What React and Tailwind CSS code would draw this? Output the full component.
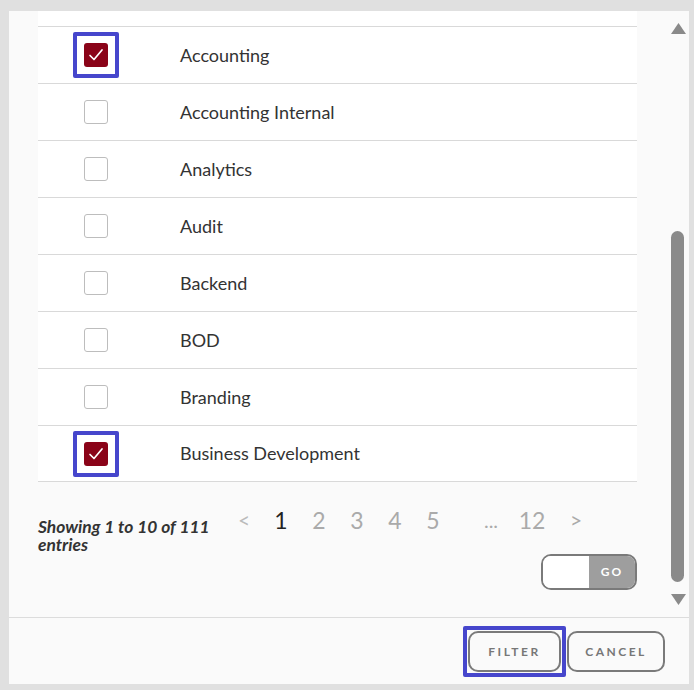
import React, { useState } from 'react';

const departments = [
  { name: 'Accounting', checked: true },
  { name: 'Accounting Internal', checked: false },
  { name: 'Analytics', checked: false },
  { name: 'Audit', checked: false },
  { name: 'Backend', checked: false },
  { name: 'BOD', checked: false },
  { name: 'Branding', checked: false },
  { name: 'Business Development', checked: true },
];

const Checkbox = ({ checked, onToggle }) => {
  if (checked) {
    return (
      <button
        onClick={onToggle}
        className="w-[46px] h-[46px] border-4 border-[#4646cc] rounded-[2px] flex items-center justify-center"
      >
        <span className="w-[24px] h-[24px] rounded-[3px] bg-[#8a0318] flex items-center justify-center">
          <svg width="20" height="20" viewBox="0 0 20 20" fill="none">
            <polyline points="4,10.5 8,14.5 16,5" stroke="white" strokeWidth="1.7" strokeLinecap="round" strokeLinejoin="round" />
          </svg>
        </span>
      </button>
    );
  }
  return (
    <button
      onClick={onToggle}
      className="w-[24px] h-[24px] rounded-[3px] border border-[#bdbdbd] bg-white"
    />
  );
};

const App = () => {
  const [items, setItems] = useState(departments);

  const toggle = (i) => {
    setItems(items.map((it, idx) => (idx === i ? { ...it, checked: !it.checked } : it)));
  };

  return (
    <div className="w-[694px] h-[690px] bg-[#e0e0e0] pt-[11px] pl-[9px] pr-[5px] pb-[6px] font-['Lato',sans-serif]">
      <div className="w-full h-full bg-[#fafafa] flex flex-col">
        {/* scroll area */}
        <div className="h-[606px] flex">
          <div className="flex-1 px-[29px] overflow-hidden">
            <div className="bg-white pt-[15px]">
              {items.map((it, i) => (
                <div
                  key={it.name}
                  className={`h-[57px] flex items-center border-t border-[#d9d9d9] ${
                    i === items.length - 1 ? 'border-b' : ''
                  }`}
                >
                  <div className="w-[116px] flex justify-center">
                    <Checkbox checked={it.checked} onToggle={() => toggle(i)} />
                  </div>
                  <span className="pl-[26px] text-[18px] text-[#333]">{it.name}</span>
                </div>
              ))}
            </div>

            <div className="bg-[#fafafa] pt-[36px] flex items-start">
              <p className="w-[190px] text-[17.4px] leading-[18px] font-bold italic text-[#333]">
                Showing 1 to 10 of 111 entries
              </p>
              <div className="flex items-center text-[23px] leading-[24px] text-[#aaa] -mt-[10px]">
                <span className="w-[16px] ml-[8px] text-center text-[21px] text-[#bbb]">&lt;</span>
                <span className="w-[38px] ml-[10px] text-center text-[#222]">1</span>
                <span className="w-[38px] text-center">2</span>
                <span className="w-[38px] text-center">3</span>
                <span className="w-[38px] text-center">4</span>
                <span className="w-[38px] text-center">5</span>
                <span className="w-[38px] ml-[20px] text-center text-[20px]">...</span>
                <span className="w-[44px] text-center">12</span>
                <span className="w-[16px] ml-[14px] text-center text-[21px]">&gt;</span>
              </div>
            </div>
            <div className="flex justify-end">
              <div className="w-[96px] h-[36px] rounded-[10px] border-2 border-[#7a7a7a] flex overflow-hidden">
                <div className="flex-1 bg-white" />
                <div className="w-[46px] bg-[#9e9e9e] flex items-center justify-center text-white text-[12px] font-bold tracking-[2px]">
                  GO
                </div>
              </div>
            </div>
          </div>

          {/* scrollbar */}
          <div className="w-[23px] flex flex-col items-center pt-[12px] pb-[12px]">
            <svg width="15" height="11" viewBox="0 0 15 11" className="ml-[1px]">
              <polygon points="7.5,0 15,11 0,11" fill="#8a8a8a" />
            </svg>
            <div className="flex-1 w-full flex flex-col items-center">
              <div className="h-[197px]" />
              <div className="w-[13px] h-[351px] rounded-full bg-[#8a8a8a]" />
            </div>
            <svg width="15" height="11" viewBox="0 0 15 11" className="ml-[1px]">
              <polygon points="0,0 15,0 7.5,11" fill="#8a8a8a" />
            </svg>
          </div>
        </div>

        {/* footer */}
        <div className="flex-1 border-t border-[#dcdcdc] flex justify-end items-start pt-[8px] pr-[24px] gap-[1px]">
          <div className="border-4 border-[#4646cc] rounded-[2px] p-[1px]">
            <button className="w-[93px] h-[41px] rounded-[10px] border-2 border-[#7a7a7a] text-[#777] text-[12px] font-bold tracking-[2.5px]">
              FILTER
            </button>
          </div>
          <button className="w-[98px] h-[41px] mt-[5px] rounded-[10px] border-2 border-[#7a7a7a] text-[#777] text-[12px] font-bold tracking-[2.5px]">
            CANCEL
          </button>
        </div>
      </div>
    </div>
  );
};

export default App;
